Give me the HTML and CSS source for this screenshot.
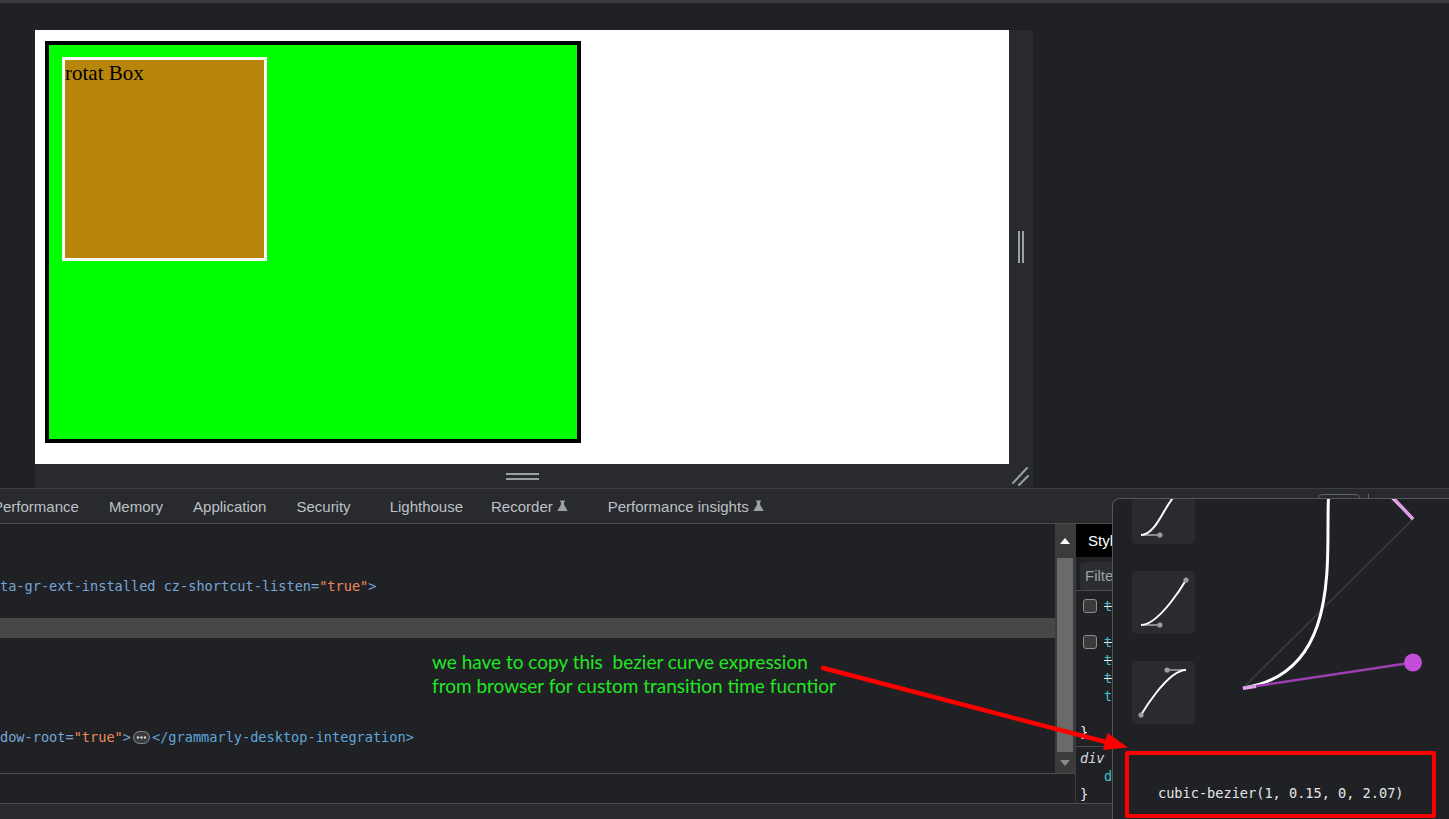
FILE: index.html
```html
<!DOCTYPE html>
<html lang="en">
<head>
<meta charset="utf-8">
<title>Bezier transition</title>
<link rel="stylesheet" href="styles.css">
</head>
<body>
<div class="topstrip"></div>
<div class="viewport">
  <div class="device">
    <div class="page">
      <div class="green-box">
        <div class="rotat-box">rotat Box</div>
      </div>
    </div>
    <div class="vbar"><span class="grip-v"></span></div>
    <div class="hbar"><span class="grip-h"></span></div>
    <div class="corner">
      <svg width="24" height="24" viewBox="0 0 24 24"><path d="M4 19 L18 4 M10 21 L19 12" stroke="#9aa0a6" stroke-width="2" stroke-linecap="round" fill="none"/></svg>
    </div>
  </div>
</div>

<div class="devtools">
  <div class="tabbar">
    <span class="tab tab-first">Performance</span>
    <span class="tab">Memory</span>
    <span class="tab">Application</span>
    <span class="tab">Security</span>
    <span class="tab tab-lh">Lighthouse</span>
    <span class="tab tab-rec">Recorder <svg class="flask" width="11" height="12" viewBox="0 0 11 12"><path d="M3 0.5h5v1.2h-0.9v3l3.6 6.3h-10.4l3.6-6.3v-3h-0.9z" fill="#9aa0a6"/></svg></span>
    <span class="tab tab-pi">Performance insights <svg class="flask" width="11" height="12" viewBox="0 0 11 12"><path d="M3 0.5h5v1.2h-0.9v3l3.6 6.3h-10.4l3.6-6.3v-3h-0.9z" fill="#9aa0a6"/></svg></span>
    <div class="tab-tools">
      <span class="tool-box"></span>
      <span class="tool-sep"></span>
    </div>
  </div>
  <div class="main">
    <div class="left">
      <div class="upper">
        <div class="dom">
          <div class="dom-row r1"><span class="attr">ta-gr-ext-installed cz-shortcut-listen=</span><span class="val">"true"</span><span class="attr">&gt;</span></div>
          <div class="dom-row hl"></div>
          <div class="dom-row r3"><span class="attr">dow-root=</span><span class="val">"true"</span><span class="attr">&gt;</span><svg class="ellip" width="17" height="13" viewBox="0 0 17 13"><rect x="0.5" y="0.5" width="16" height="12" rx="6" fill="#3c3d40" stroke="#8a8d91"/><circle cx="5" cy="6.5" r="1.2" fill="#d5d7da"/><circle cx="8.5" cy="6.5" r="1.2" fill="#d5d7da"/><circle cx="12" cy="6.5" r="1.2" fill="#d5d7da"/></svg><span class="tag">&lt;/grammarly-desktop-integration&gt;</span></div>
        </div>
        <div class="scrollbar">
          <div class="sb-up"><span class="tri-up"></span></div>
          <div class="sb-thumb"></div>
          <div class="sb-down"><span class="tri-down"></span></div>
        </div>
      </div>
      <div class="lower"></div>
    </div>
    <div class="styles">
      <div class="styles-head"><span class="styles-tab">Styles</span></div>
      <div class="filter-row"><div class="filter-input">Filter</div></div>
      <div class="rule">
        <div class="rule-line"><span class="cb"></span><span class="prop strike">transition: all 2s;</span></div>
        <div class="rule-line"></div>
        <div class="rule-line"><span class="cb"></span><span class="prop strike">transition-property: all;</span></div>
        <div class="rule-line ind"><span class="prop strike">transition-duration: 2s;</span></div>
        <div class="rule-line ind"><span class="prop strike">transition-delay: 0s;</span></div>
        <div class="rule-line ind"><span class="prop">transition-timing-function: ease;</span></div>
        <div class="rule-line"></div>
        <div class="rule-line close">}</div>
      </div>
      <div class="rule rule2">
        <div class="rule-line close"><span class="sel">div</span></div>
        <div class="rule-line ind"><span class="prop">display: block;</span></div>
        <div class="rule-line close">}</div>
      </div>
    </div>
  </div>
  <div class="statusbar"></div>
</div>

<div class="popup">
  <div class="popup-body">
    <div class="presets">
      <div class="preset">
        <svg width="63" height="63" viewBox="0 0 63 63"><path d="M9 54 H27.9 M54 9 H35.1" stroke="#8a8a8a" stroke-width="2"/><path d="M9 54 C27.9 54 35.1 9 54 9" stroke="#fff" stroke-width="2" fill="none"/><circle cx="27.9" cy="54" r="2.6" fill="#9e9e9e"/><circle cx="35.1" cy="9" r="2.6" fill="#9e9e9e"/></svg>
      </div>
      <div class="preset">
        <svg width="63" height="63" viewBox="0 0 63 63"><path d="M9 54 H27.9" stroke="#8a8a8a" stroke-width="2"/><path d="M9 54 C27.9 54 54 9 54 9" stroke="#fff" stroke-width="2" fill="none"/><circle cx="27.9" cy="54" r="2.6" fill="#9e9e9e"/><circle cx="54" cy="9" r="2.6" fill="#9e9e9e"/></svg>
      </div>
      <div class="preset">
        <svg width="63" height="63" viewBox="0 0 63 63"><path d="M54 9 H35.1" stroke="#8a8a8a" stroke-width="2"/><path d="M9 54 C9 54 35.1 9 54 9" stroke="#fff" stroke-width="2" fill="none"/><circle cx="9" cy="54" r="2.6" fill="#9e9e9e"/><circle cx="35.1" cy="9" r="2.6" fill="#9e9e9e"/></svg>
      </div>
    </div>
    <svg class="graph" width="234" height="252" viewBox="0 0 234 252">
      <line x1="28" y1="189" x2="198" y2="20" stroke="#3a3b3e" stroke-width="1.5"/>
      <path d="M28 189 C198 163.6 28 -161 198 20" stroke="#fff" stroke-width="3" fill="none"/>
      <line x1="198" y1="20" x2="28" y2="-161" stroke="#e39be9" stroke-width="3.2"/>
      <line x1="28" y1="189" x2="198" y2="163.6" stroke="#9b3fb0" stroke-width="2.5"/>
      <line x1="28" y1="189.5" x2="41" y2="187.5" stroke="#e6a6ee" stroke-width="3"/>
      <circle cx="198" cy="163.6" r="9" fill="#c34fd9"/>
    </svg>
  </div>
  <div class="popup-foot">cubic-bezier(1, 0.15, 0, 2.07)</div>
</div>

<div class="note">
  <div class="note-line">we have to copy this  bezier curve expression</div>
  <div class="note-line">from browser for custom transition time fucntior</div>
</div>
<svg class="arrow" width="1449" height="819" viewBox="0 0 1449 819">
  <line x1="823" y1="668" x2="1108" y2="742.5" stroke="#ff0000" stroke-width="4.5" stroke-linecap="round"/>
  <polygon points="1128,747.5 1103,750 1107.5,733" fill="#ff0000"/>
</svg>
<div class="redbox"></div>
</body>
</html>
```
FILE: styles.css
```css
html, body {
  margin: 0;
  padding: 0;
}
body {
  width: 1449px;
  height: 819px;
  overflow: hidden;
  position: relative;
  background: #202124;
  font-family: "Liberation Sans", Arial, sans-serif;
}

.topstrip {
  height: 3px;
  background: #3a3b3e;
}

/* ---------- device viewport ---------- */
.viewport {
  height: 485px;
  box-sizing: border-box;
  padding: 27px 0 0 35px;
}
.device {
  display: grid;
  grid-template-columns: 974px 24px;
  grid-template-rows: 434px 24px;
}
.page {
  background: #ffffff;
  box-sizing: border-box;
  padding: 11px 0 0 10px;
}
.green-box {
  width: 536px;
  height: 402px;
  box-sizing: border-box;
  border: 4px solid #000;
  background: #00ff00;
  padding: 12px 0 0 13px;
}
.rotat-box {
  width: 205px;
  height: 204px;
  box-sizing: border-box;
  border: 3px solid #fafafa;
  background: #b8860b;
  font-family: "Liberation Serif", "Times New Roman", serif;
  font-size: 21px;
  line-height: 26px;
  color: #000;
}
.vbar, .hbar, .corner {
  background: #292a2d;
  display: flex;
  align-items: center;
  justify-content: center;
}
.grip-v {
  width: 2px;
  height: 32px;
  border-left: 2px solid #9aa0a6;
  border-right: 2px solid #9aa0a6;
}
.grip-h {
  width: 33px;
  height: 3px;
  border-top: 2px solid #9aa0a6;
  border-bottom: 2px solid #9aa0a6;
}

/* ---------- devtools ---------- */
.devtools {
  border-top: 1px solid #3c3d41;
}
.tabbar {
  height: 34px;
  background: #292a2d;
  border-bottom: 1px solid #4a4c50;
  display: flex;
  align-items: center;
  gap: 30px;
  font-size: 15px;
  color: #bdc1c6;
  white-space: nowrap;
}
.tab {
  display: inline-flex;
  align-items: center;
  gap: 4px;
}
.tab-first { margin-left: -7px; }
.tab-lh { margin-left: 9px; }
.tab-rec { margin-left: -2px; }
.tab-pi { margin-left: 10px; }
.flask { display: block; }
.tab-tools {
  margin-left: auto;
  align-self: flex-start;
  display: flex;
  gap: 8px;
  padding: 5px 80px 0 0;
}
.tool-box {
  width: 42px;
  height: 22px;
  box-sizing: border-box;
  border: 1px solid #5f6368;
  border-radius: 4px;
}
.tool-sep {
  width: 1px;
  height: 18px;
  background: #5f6368;
}

.main {
  display: flex;
  height: 279px;
}
.left {
  width: 1075px;
  display: flex;
  flex-direction: column;
}
.upper {
  height: 249px;
  display: flex;
}
.lower {
  flex: 1;
  border-top: 1px solid #4a4c50;
}
.dom {
  width: 1055px;
  display: flex;
  flex-direction: column;
  font-family: "DejaVu Sans Mono", "Liberation Mono", monospace;
  font-size: 13.6px;
  white-space: pre;
}
.dom-row {
  height: 21px;
  line-height: 21px;
  display: flex;
  align-items: center;
}
.r1 { margin-top: 52px; }
.hl {
  margin-top: 21px;
  height: 20px;
  background: #474747;
}
.r3 { margin-top: 89px; }
.attr { color: #78a6d8; }
.val { color: #f08a58; }
.tag { color: #5ea6dc; }
.ellip {
  display: block;
  margin: 0 2px;
}

.scrollbar {
  width: 20px;
  background: #3b3b3b;
  display: flex;
  flex-direction: column;
  align-items: center;
}
.sb-up {
  height: 34px;
  display: flex;
  align-items: center;
  justify-content: center;
}
.tri-up {
  width: 0;
  height: 0;
  border-left: 5px solid transparent;
  border-right: 5px solid transparent;
  border-bottom: 6px solid #ffffff;
}
.sb-thumb {
  width: 16px;
  height: 194px;
  background: #6a6a6a;
}
.sb-down {
  flex: 1;
  display: flex;
  align-items: center;
  justify-content: center;
}
.tri-down {
  width: 0;
  height: 0;
  border-left: 5px solid transparent;
  border-right: 5px solid transparent;
  border-top: 6px solid #8a8a8a;
}

/* ---------- styles pane ---------- */
.styles {
  flex: 1;
  border-left: 1px solid #3c3c3c;
  overflow: hidden;
  white-space: nowrap;
}
.styles-head {
  height: 33px;
  display: flex;
}
.styles-tab {
  background: #000;
  color: #fff;
  font-size: 15px;
  line-height: 33px;
  padding: 0 12px;
}
.filter-row {
  height: 34px;
  box-sizing: border-box;
  padding: 5px 4px 0 4px;
  border-bottom: 1px solid #4a4c50;
}
.filter-input {
  height: 28px;
  line-height: 28px;
  background: #2c2d30;
  border-radius: 4px;
  padding-left: 5px;
  color: #9aa0a6;
  font-size: 15px;
}
.rule {
  padding: 6px 0 5px 0;
  border-bottom: 1px solid #4a4c50;
  font-family: "DejaVu Sans Mono", "Liberation Mono", monospace;
  font-size: 13.6px;
}
.rule2 {
  padding-top: 2px;
  border-bottom: none;
}
.rule-line {
  height: 18px;
  line-height: 18px;
  display: flex;
  align-items: center;
  padding-left: 7px;
  color: #e8eaed;
}
.rule-line.ind { padding-left: 28px; }
.rule-line.close { padding-left: 4px; }
.cb {
  width: 14px;
  height: 14px;
  box-sizing: border-box;
  border: 1px solid #8d8d8d;
  border-radius: 3px;
  background: #3a3a3a;
  margin-right: 7px;
  flex-shrink: 0;
}
.prop { color: #3fc0c9; }
.strike {
  text-decoration: line-through;
  text-decoration-color: #e8eaed;
}
.sel {
  font-style: italic;
  color: #d6dae0;
}

.statusbar {
  height: 15px;
  border-top: 1px solid #4a4c50;
  background: #292a2d;
}

/* ---------- bezier popover ---------- */
.popup {
  position: absolute;
  left: 1112px;
  top: 498px;
  width: 345px;
  height: 330px;
  box-sizing: border-box;
  border-top: 1px solid #55575b;
  border-left: 1px solid #55575b;
  border-top-left-radius: 8px;
  background: #202124;
  overflow: hidden;
}
.popup-body {
  height: 252px;
  display: flex;
  overflow: hidden;
}
.presets {
  margin: -18px 0 0 19px;
  display: flex;
  flex-direction: column;
  gap: 27px;
}
.preset {
  width: 63px;
  height: 63px;
  flex-shrink: 0;
  background: #2a2b2e;
  border-radius: 5px;
}
.preset svg { display: block; }
.graph {
  display: block;
  margin-left: 20px;
  flex-shrink: 0;
}
.popup-foot {
  padding: 33px 0 0 45px;
  line-height: 18px;
  font-family: "DejaVu Sans Mono", "Liberation Mono", monospace;
  font-size: 13.6px;
  color: #e3e6ea;
  white-space: pre;
}

/* ---------- annotations ---------- */
.note {
  position: absolute;
  left: 432px;
  top: 650px;
  font-family: Lato, "Open Sans", sans-serif;
  font-size: 19px;
  line-height: 24px;
  color: #22e622;
}
.note-line {
  white-space: pre;
}
.arrow {
  position: absolute;
  left: 0;
  top: 0;
  pointer-events: none;
}
.redbox {
  position: absolute;
  left: 1125px;
  top: 751px;
  width: 311px;
  height: 67px;
  box-sizing: border-box;
  border: 4px solid #ff0000;
  border-radius: 2px;
}
```
